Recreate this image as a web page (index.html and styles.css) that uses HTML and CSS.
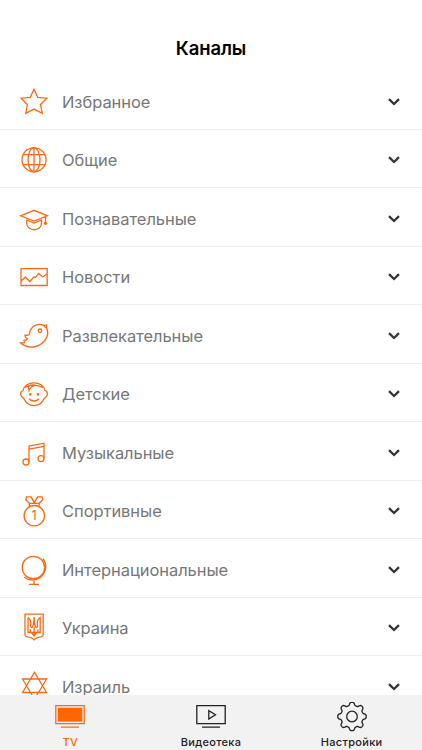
FILE: index.html
```
<!DOCTYPE html>
<html lang="ru">
<head>
    <meta charset="UTF-8">
    <meta name="viewport" content="width=device-width, initial-scale=1.0">
    <title>Каналы</title>
    <link rel="stylesheet" href="styles.css">
</head>
<body>
    <svg class="defs">
        <symbol id="chevron" viewBox="0 0 14 10">
            <path d="M2 2.2 L7 7 L12 2.2"/>
        </symbol>
    </svg>
    <h1>Каналы</h1>
    <ul class="channels">
        <li>
            <svg class="icon" viewBox="0 0 32 32"><path d="M16 3.2 L19.8 11.3 L28.8 12.2 L22.5 18.5 L24.3 27.3 L16 23.1 L7.8 27.3 L9.4 18.5 L3.2 12.2 L12.2 11.3 Z"/></svg>
            <span>Избранное</span>
            <svg class="chevron"><use href="#chevron"/></svg>
        </li>
        <li>
            <svg class="icon" viewBox="0 0 32 32"><circle cx="16" cy="15.8" r="12"/><ellipse cx="16" cy="15.8" rx="6" ry="12"/><path d="M16 3.8 V27.8 M5.2 10.7 H26.8 M5.2 20.7 H26.8"/></svg>
            <span>Общие</span>
            <svg class="chevron"><use href="#chevron"/></svg>
        </li>
        <li>
            <svg class="icon" viewBox="0 0 32 32"><path d="M2.6 12.8 L16 7.3 L29.3 12.8 L16 18 Z M8.7 17 L16 20 L23.5 17 V20 C23.5 29 8.7 29 8.7 20 Z M27.5 13.5 V20"/><circle class="fill" cx="27.5" cy="20.3" r="1.6"/></svg>
            <span>Познавательные</span>
            <svg class="chevron"><use href="#chevron"/></svg>
        </li>
        <li>
            <svg class="icon" viewBox="0 0 32 32"><path d="M3 7.7 H29.2 V24.5 H3 Z M3 20.3 L7.3 16 L11.7 20.5 L16 16 L17.5 16.3 L20.7 12.5 L24.7 16 L29 12.8"/></svg>
            <span>Новости</span>
            <svg class="chevron"><use href="#chevron"/></svg>
        </li>
        <li>
            <svg class="icon" viewBox="0 0 32 32"><path d="M28.7 5.2 L25.2 5.1 C18 2.5 11.7 8 11.6 14 C11.5 15.2 9 15.6 7 15.1 C7 17 8 18.2 9.4 18.8 C8.4 19.8 6.8 20.5 6 20.5 L6.6 22.6 L2.5 22.8 C9 29.3 20 28 26 21.5 C30 17 30.4 12 28.7 8.4 Z M25.2 5.1 L28.7 8.4"/><circle cx="22" cy="10.8" r="1.8"/></svg>
            <span>Развлекательные</span>
            <svg class="chevron"><use href="#chevron"/></svg>
        </li>
        <li>
            <svg class="icon" viewBox="0 0 32 32"><path d="M5 12.6 C7 2.2 25 2.2 27 12.6 C29.6 13.2 30 16 28.7 18 C28 19.2 26.8 20 26 20.8 C22 30 10 30 6 20.8 C5.2 20 4 19.2 3.3 18 C2 16 2.4 13.2 5 12.6 Z M7 9.5 L10.2 8 L11 12.4 C12 9.6 14.5 8.2 17 7.2 C20 7.6 22.5 8.6 25 9.6 M10.4 8.6 C12 7 14.5 6.8 17 7.2"/><path d="M11 20.7 Q16 25.4 21 20.7"/><circle class="fill" cx="12.3" cy="16.4" r="1.3"/><circle class="fill" cx="20" cy="16.4" r="1.3"/></svg>
            <span>Детские</span>
            <svg class="chevron"><use href="#chevron"/></svg>
        </li>
        <li>
            <svg class="icon" viewBox="0 0 32 32"><path d="M11 25.2 V9 L26 6.2 V21.5 M11 12.2 L26 9.4"/><circle cx="8" cy="25" r="3"/><circle cx="23" cy="21.6" r="3"/></svg>
            <span>Музыкальные</span>
            <svg class="chevron"><use href="#chevron"/></svg>
        </li>
        <li>
            <svg class="icon" viewBox="0 0 32 32"><circle cx="16.3" cy="20.7" r="10.2"/><path d="M11.4 11 V8.3 H21.2 V11 M11.4 8.3 L7.8 4.8 L8.4 1.9 H13 L16.3 7.8 L19.6 1.9 H24.2 L24.6 4.8 L21.2 8.3 M13 1.9 L17 8.3 M19.6 1.9 L16 8.3"/><text x="16" y="25.2">1</text></svg>
            <span>Спортивные</span>
            <svg class="chevron"><use href="#chevron"/></svg>
        </li>
        <li>
            <svg class="icon" viewBox="0 0 32 32"><circle cx="15.4" cy="13.5" r="11.2"/><path d="M25 4.6 A13.3 13.3 0 0 1 6.3 23.2 M16 26.8 V30.4 M11 30.4 H21"/></svg>
            <span>Интернациональные</span>
            <svg class="chevron"><use href="#chevron"/></svg>
        </li>
        <li>
            <svg class="icon" viewBox="0 0 32 32"><path d="M7 2.2 H25.2 V23 Q25 24.5 23 24.8 Q18 25.3 16.1 27.8 Q14.2 25.3 9.2 24.8 Q7.2 24.5 7 23 Z"/><path d="M10 5.5 V20.5 H22.2 V5.5 C19.3 7.5 19 10 19.5 13 Q19.8 15.4 18 15.4 Q16.3 13 16.1 5 Q15.9 13 14.2 15.4 Q12.4 15.4 12.7 13 C13.2 10 12.9 7.5 10 5.5 M12.3 17.2 V20.5 M16.1 15 V24 M19.9 17.2 V20.5 M13.5 20.5 L16.1 24 L18.7 20.5"/></svg>
            <span>Украина</span>
            <svg class="chevron"><use href="#chevron"/></svg>
        </li>
        <li>
            <svg class="icon" viewBox="0 0 32 32"><path d="M16.5 1.3 L28.6 21.5 H4.5 Z M16.5 28.2 L28.6 8 H4.5 Z"/></svg>
            <span>Израиль</span>
            <svg class="chevron"><use href="#chevron"/></svg>
        </li>
    </ul>
    <nav class="tabs">
        <a class="tab active">
            <svg viewBox="0 0 30 30"><path d="M0.8 3.7 H29.2 V21.6 H0.8 Z M6 25.2 H24"/><rect class="fill" x="2.7" y="5.7" width="24.6" height="14"/></svg>
            <span>TV</span>
        </a>
        <a class="tab">
            <svg viewBox="0 0 30 30"><path d="M0.8 3.7 H29.2 V21.6 H0.8 Z M6 25.2 H24 M12.8 8.6 V17 L19.5 12.8 Z"/></svg>
            <span>Видеотека</span>
        </a>
        <a class="tab">
            <svg viewBox="0 0 30 30"><circle cx="15" cy="14.5" r="5.3"/><path id="gear"/></svg>
            <span>Настройки</span>
        </a>
    </nav>
    <script src="script.js"></script>
</body>
</html>
```
FILE: styles.css
```
body {
    display: flex;
    flex-direction: column;
    height: 750px;
    margin: 0;
    overflow: hidden;
    background-color: #fff;
    font-family: Inter, "Noto Sans", sans-serif;
}
.defs {
    position: absolute;
    width: 0;
    height: 0;
}
h1 {
    flex: none;
    box-sizing: border-box;
    height: 71px;
    margin: 0;
    padding-top: 36px;
    font-size: 18.5px;
    line-height: 24px;
    font-weight: 600;
    letter-spacing: -0.1px;
    text-align: center;
    color: #000;
}
.channels {
    flex: 1;
    min-height: 0;
    margin: 0;
    padding: 0;
    overflow: hidden;
    list-style: none;
}
.channels li {
    display: flex;
    align-items: center;
    box-sizing: border-box;
    height: 58.5px;
    padding: 3.5px 21.5px 0 18px;
    border-bottom: 1px solid #efefef;
    font-size: 16.5px;
    letter-spacing: -0.06px;
    color: #777;
}
.channels span {
    flex: 1;
    margin-left: 12px;
}
svg {
    fill: none;
    stroke: #222;
    stroke-width: 1.3;
}
.icon {
    width: 32px;
    height: 32px;
    stroke: #f96a14;
    stroke-width: 1.3;
}
.icon .fill {
    fill: #f96a14;
    stroke: none;
}
.icon text {
    fill: #f96a14;
    stroke: none;
    font-size: 13px;
    text-anchor: middle;
}
.chevron {
    width: 14px;
    height: 10px;
    stroke: #333;
    stroke-width: 2.3;
}
.tabs {
    display: flex;
    flex: none;
    height: 55px;
    background-color: #f2f2f2;
}
.tab {
    display: flex;
    flex: 1 0 0;
    flex-direction: column;
    align-items: center;
    padding-top: 7px;
    font-size: 11px;
    line-height: 14px;
    font-weight: 500;
    letter-spacing: 0.3px;
    color: #222;
}
.tab svg {
    width: 30px;
    height: 30px;
    margin-bottom: 3px;
}
.tab.active {
    color: #f96a14;
}
.tab.active svg {
    stroke: #f96a14;
}
.tab .fill {
    fill: #ff6600;
    stroke: none;
}
```
FILE: script.js
```
// gear outline: eight rounded teeth
const points = [];
for (let i = 0; i <= 180; i++) {
    const a = i * Math.PI / 90;
    const r = 12.7 + 1.6 * Math.tanh(1.8 * Math.cos(8 * a));
    points.push((15 + r * Math.sin(a)).toFixed(2) + ' ' + (14.5 - r * Math.cos(a)).toFixed(2));
}
document.getElementById('gear').setAttribute('d', 'M' + points.join(' L') + ' Z');
```
